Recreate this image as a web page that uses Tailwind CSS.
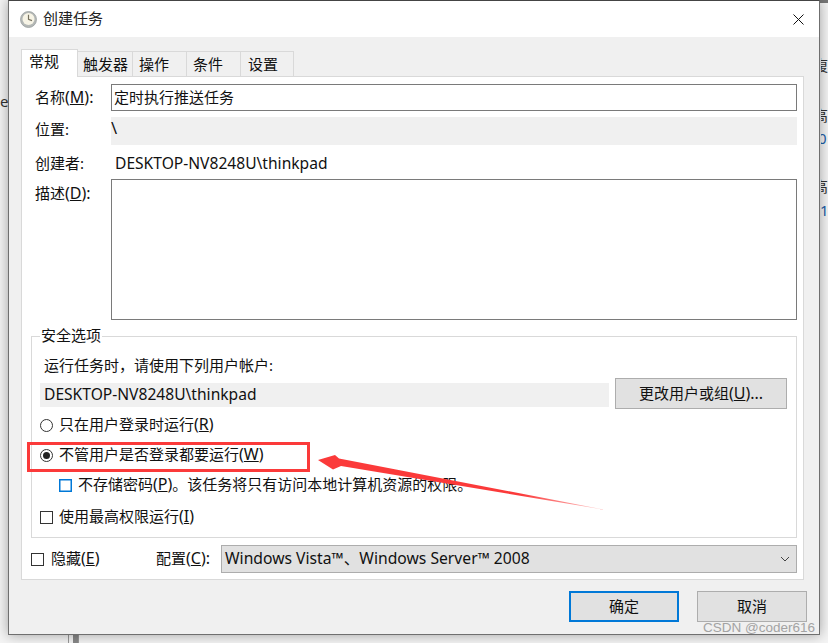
<!DOCTYPE html>
<html lang="zh-CN">
<head>
    <meta charset="UTF-8">
    <title>创建任务</title>
    <script src="https://cdn.jsdelivr.net/npm/@tailwindcss/browser@4"></script>
</head>
<body class="relative w-[828px] h-[643px] overflow-hidden bg-[#f4f4f4] font-['Noto_Sans','Noto_Sans_CJK_SC',sans-serif] text-[15px] leading-[20px] text-[#111]">
    <!-- window behind the dialog -->
    <div class="absolute left-0 top-[91px] text-[15px] text-[#333] w-[8px] overflow-hidden"><span class="block">e</span></div>
    <div class="absolute left-[820px] top-0 h-[3px] w-[8px] bg-[#777]"></div>
    <div class="absolute left-[821px] top-[55px] w-[7px] overflow-hidden text-[#333]"><span class="block -ml-[8px]">復</span></div>
    <div class="absolute left-[821px] top-[105px] w-[7px] overflow-hidden text-[#333]"><span class="block -ml-[8px]">高</span></div>
    <div class="absolute left-[821px] top-[128px] w-[7px] overflow-hidden text-[#1d5fa8]"><span class="block -ml-[3px]">0</span></div>
    <div class="absolute left-[821px] top-[176px] w-[7px] overflow-hidden text-[#333]"><span class="block -ml-[8px]">高</span></div>
    <div class="absolute left-[821px] top-[200px] w-[7px] overflow-hidden text-[#1d5fa8]"><span class="block -ml-[1px]">1</span></div>
    <div class="absolute left-[68px] top-[630px] h-[13px] w-[11px] border-x border-[#999] flex justify-end"><div class="w-[5px] h-full bg-[#888]"></div></div>

    <!-- dialog -->
    <div class="absolute left-[8px] top-0 w-[812px] h-[635px] flex flex-col border border-[#6f6f6f] border-t-[#444] shadow-[0_0_12px_rgba(0,0,0,0.35)] bg-[#f0f0f0]">
        <div class="h-[36px] shrink-0 bg-white flex items-center pl-[11px] pr-[15px]">
            <svg width="17" height="17" viewBox="0 0 17 17">
                <circle cx="8.5" cy="8.5" r="8" fill="#b4b8b6" stroke="#9ba09f" stroke-width="0.8"/>
                <circle cx="8.5" cy="8" r="6" fill="#f7f4e6"/>
                <path d="M8.5 3.8V8.4L12 9.6" fill="none" stroke="#77725f" stroke-width="1.2"/>
            </svg>
            <span class="ml-[6px] -mt-[2px] text-[#222]">创建任务</span>
            <svg class="ml-auto" width="11" height="11" viewBox="0 0 11 11"><path d="M.5.5l10 10M10.5.5l-10 10" fill="none" stroke="#111" stroke-width="1"/></svg>
        </div>

        <div class="pl-[12px] pt-[12px]">
            <!-- tabs -->
            <div class="flex items-start h-[28px] relative z-10">
                <div class="w-[57px] h-[28px] bg-white border border-b-0 border-[#d9d9d9] pl-[7px] pt-[1px]">常规</div>
                <div class="mt-[2px] w-[55px] h-[25px] border-t border-r border-[#d9d9d9] bg-[#f0f0f0] pl-[5px] pt-[2px]">触发器</div>
                <div class="mt-[2px] w-[54px] h-[25px] border-t border-r border-[#d9d9d9] bg-[#f0f0f0] pl-[6px] pt-[2px]">操作</div>
                <div class="mt-[2px] w-[54px] h-[25px] border-t border-r border-[#d9d9d9] bg-[#f0f0f0] pl-[6px] pt-[2px]">条件</div>
                <div class="mt-[2px] w-[53px] h-[25px] border-t border-r border-[#d9d9d9] bg-[#f0f0f0] pl-[7px] pt-[2px]">设置</div>
            </div>

            <!-- panel -->
            <div class="-mt-px w-[783px] h-[504px] bg-white border border-[#d9d9d9] pl-[9px] pr-[6px] pt-[7px]">
                <div class="flex items-center h-[27px] pl-[4px]">
                    <span class="w-[76px] shrink-0 -mt-[1px]">名称<span class="text-[16px]">(<u>M</u>):</span></span>
                    <div class="flex-1 h-[27px] border border-[#7a7a7a] pl-[2px] pb-[2px] flex items-center">定时执行推送任务</div>
                </div>
                <div class="flex mt-[6px] h-[28px] pl-[4px]">
                    <span class="w-[76px] shrink-0 pt-[2px]">位置:</span>
                    <div class="flex-1 bg-[#f0f0f0] pt-[1px] text-[16.5px]">\</div>
                </div>
                <div class="flex items-center mt-[8px] h-[20px] pl-[4px]">
                    <span class="w-[76px] shrink-0">创建者:</span>
                    <span class="pl-[4px] text-[15.6px]">DESKTOP-NV8248U\thinkpad</span>
                </div>
                <div class="flex mt-[6px] h-[141px] pl-[4px]">
                    <span class="w-[76px] shrink-0 pt-[4px]">描述<span class="text-[16px]">(<u>D</u>):</span></span>
                    <div class="flex-1 border border-[#7a7a7a] bg-white"></div>
                </div>

                <!-- security options -->
                <div class="relative mt-[16px] h-[202px] border border-[#d9d9d9] pl-[8px]">
                    <span class="absolute left-[8px] -top-[12px] bg-white px-px">安全选项</span>
                    <div class="pl-[4px] pt-[18px] h-[46px]">运行任务时，请使用下列用户帐户:</div>
                    <div class="flex items-start h-[24px]">
                        <div class="w-[569px] h-[24px] bg-[#f0f0f0] pl-[4px] pb-[3px] flex items-center text-[15.6px]">DESKTOP-NV8248U\thinkpad</div>
                        <div class="ml-[6px] -mt-[5px] shrink-0 w-[172px] h-[31px] bg-[#e1e1e1] border border-[#adadad] pb-[2px] flex items-center justify-center">更改用户或组<span class="text-[16px]">(<u>U</u>)...</span></div>
                    </div>
                    <div class="flex items-center mt-[8px] h-[20px]">
                        <span class="w-[13px] h-[13px] rounded-full border border-[#333] bg-white"></span>
                        <span class="ml-[6px] -mt-[2px]">只在用户登录时运行<span class="text-[16px]">(<u>R</u>)</span></span>
                    </div>
                    <div class="flex items-center mt-[10px] h-[20px]">
                        <span class="w-[13px] h-[13px] rounded-full border border-[#333] bg-white flex items-center justify-center"><span class="w-[7px] h-[7px] rounded-full bg-[#222]"></span></span>
                        <span class="ml-[6px] -mt-[2px]">不管用户是否登录都要运行<span class="text-[16px]">(<u>W</u>)</span></span>
                    </div>
                    <div class="flex items-center mt-[10px] h-[20px] pl-[19px]">
                        <span class="w-[13px] h-[13px] border border-[#0078d7] shadow-[inset_0_0_0_0.5px_#0078d7] bg-white"></span>
                        <span class="ml-[6px] -mt-[2px]">不存储密码<span class="text-[16px]">(<u>P</u>)</span>。该任务将只有访问本地计算机资源的权限。</span>
                    </div>
                    <div class="flex items-center mt-[12px] h-[20px]">
                        <span class="w-[13px] h-[13px] border border-[#333] bg-white"></span>
                        <span class="ml-[6px] -mt-[2px]">使用最高权限运行<span class="text-[16px]">(<u>I</u>)</span></span>
                    </div>
                </div>

                <div class="flex items-center mt-[7px] h-[28px]">
                    <span class="w-[13px] h-[13px] border border-[#333] bg-white"></span>
                    <span class="ml-[7px] w-[105px] -mt-[2px]">隐藏<span class="text-[16px]">(<u>E</u>)</span></span>
                    <span class="w-[65px] -mt-[2px]">配置<span class="text-[16px]">(<u>C</u>):</span></span>
                    <div class="w-[576px] h-[28px] bg-[#e1e1e1] border border-[#adadad] flex items-center pl-[3px] pr-[6px] justify-between">
                        <span class="text-[15.7px] -mt-[2px]">Windows Vista™、Windows Server™ 2008</span>
                        <svg width="10" height="6" viewBox="0 0 10 6"><path d="M1 1l4 4 4-4" fill="none" stroke="#444"/></svg>
                    </div>
                </div>
            </div>
        </div>

        <div class="flex justify-end pr-[12px] mt-[11px] gap-[18px]">
            <div class="w-[110px] h-[31px] bg-[#e1e1e1] border-[2px] border-[#0078d7] pb-[2px] flex items-center justify-center">确定</div>
            <div class="w-[110px] h-[31px] bg-[#e1e1e1] border border-[#adadad] pb-[2px] flex items-center justify-center">取消</div>
        </div>
    </div>

    <!-- annotation -->
    <div class="absolute left-[27px] top-[442px] w-[283px] h-[30px] border-[3px] border-[#fb3a3a]"></div>
    <svg class="absolute left-0 top-0" width="828" height="643" viewBox="0 0 828 643">
        <defs>
            <linearGradient id="tail" gradientUnits="userSpaceOnUse" x1="520" y1="495" x2="606" y2="510">
                <stop offset="0" stop-color="#fb3a3a"/>
                <stop offset="1" stop-color="#fb3a3a" stop-opacity="0.25"/>
            </linearGradient>
        </defs>
        <path d="M318 460L335 455L339 458.5L606 510L341 466L333 469.5Z" fill="url(#tail)"/>
    </svg>
    <div class="absolute left-[703px] top-[619px] text-[13.5px] leading-[18px] text-[#a3a3a3] font-['Liberation_Sans',sans-serif]">CSDN @coder616</div>
</body>
</html>
